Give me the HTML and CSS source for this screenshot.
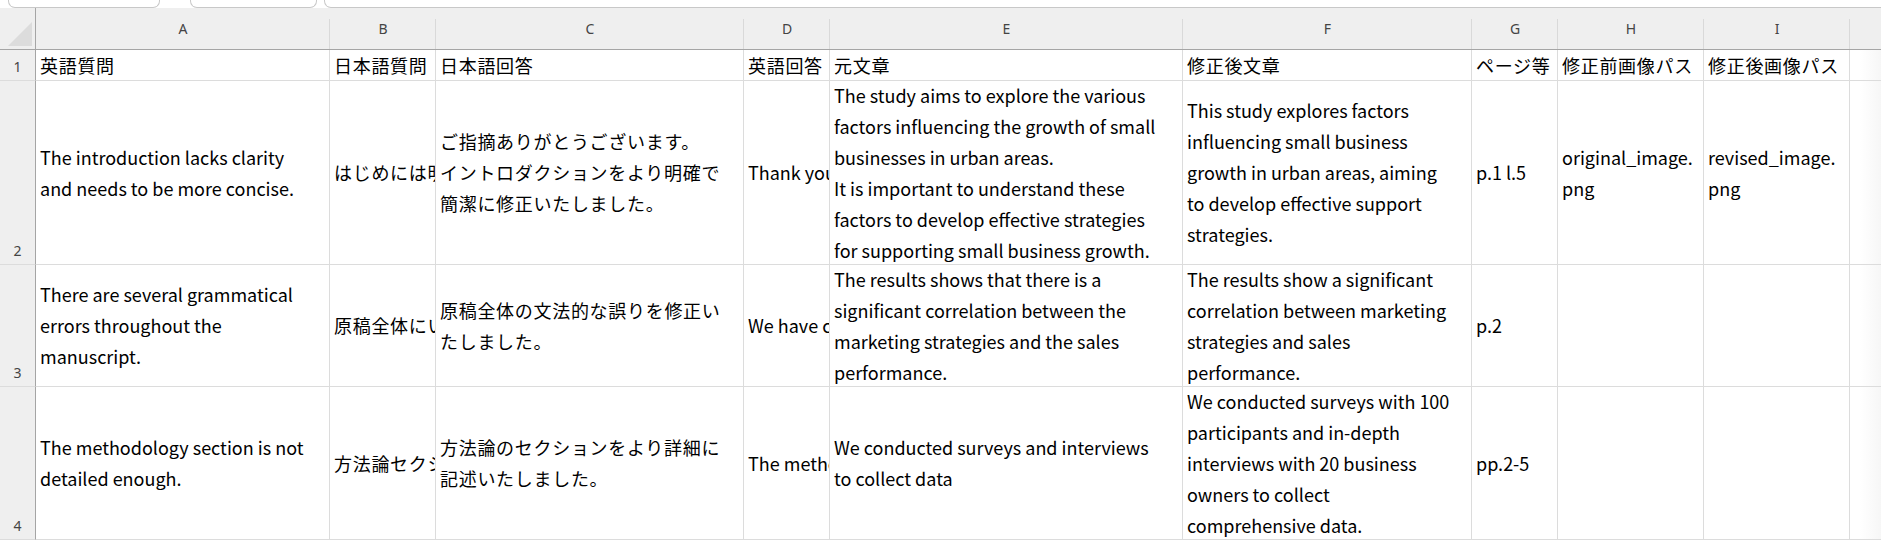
FILE: index.html
```html
<!DOCTYPE html>
<html lang="ja">
<head>
<meta charset="utf-8">
<title>Sheet</title>
<link rel="stylesheet" href="styles.css">
</head>
<body>
<div class="topbar">
  <div class="box box-name"></div>
  <div class="box box-fx"></div>
  <div class="box box-formula"></div>
</div>
<div class="sheet">
  <div class="corner"><svg width="36" height="41" viewBox="0 0 36 41"><polygon points="8,38 32,38 32,14" fill="#dcdcdc"/></svg></div>
  <div class="colhdr">A</div>
  <div class="colhdr">B</div>
  <div class="colhdr">C</div>
  <div class="colhdr">D</div>
  <div class="colhdr">E</div>
  <div class="colhdr">F</div>
  <div class="colhdr">G</div>
  <div class="colhdr">H</div>
  <div class="colhdr">I</div>
  <div class="colhdr last"></div>

  <div class="rowhdr">1</div>
  <div class="cell ja">英語質問</div>
  <div class="cell ja">日本語質問</div>
  <div class="cell ja">日本語回答</div>
  <div class="cell ja">英語回答</div>
  <div class="cell ja">元文章</div>
  <div class="cell ja">修正後文章</div>
  <div class="cell ja">ページ等</div>
  <div class="cell ja">修正前画像パス</div>
  <div class="cell ja">修正後画像パス</div>
  <div class="cell fade"></div>

  <div class="rowhdr">2</div>
  <div class="cell"><p>The introduction lacks clarity<br>and needs to be more concise.</p></div>
  <div class="cell ja"><p>はじめには明確さが欠けており、より簡潔にする必要があります。</p></div>
  <div class="cell ja"><p>ご指摘ありがとうございます。<br>イントロダクションをより明確で<br>簡潔に修正いたしました。</p></div>
  <div class="cell"><p>Thank you for your comment. We have revised the introduction.</p></div>
  <div class="cell"><p>The study aims to explore the various<br>factors influencing the growth of small<br>businesses in urban areas.<br>It is important to understand these<br>factors to develop effective strategies<br>for supporting small business growth.</p></div>
  <div class="cell"><p>This study explores factors<br>influencing small business<br>growth in urban areas, aiming<br>to develop effective support<br>strategies.</p></div>
  <div class="cell"><p>p.1 l.5</p></div>
  <div class="cell"><p>original_image.<br>png</p></div>
  <div class="cell"><p>revised_image.<br>png</p></div>
  <div class="cell fade"></div>

  <div class="rowhdr">3</div>
  <div class="cell"><p>There are several grammatical<br>errors throughout the<br>manuscript.</p></div>
  <div class="cell ja"><p>原稿全体にいくつかの文法的な誤りがあります。</p></div>
  <div class="cell ja"><p>原稿全体の文法的な誤りを修正い<br>たしました。</p></div>
  <div class="cell"><p>We have corrected the grammatical errors.</p></div>
  <div class="cell"><p>The results shows that there is a<br>significant correlation between the<br>marketing strategies and the sales<br>performance.</p></div>
  <div class="cell"><p>The results show a significant<br>correlation between marketing<br>strategies and sales<br>performance.</p></div>
  <div class="cell"><p>p.2</p></div>
  <div class="cell"></div>
  <div class="cell"></div>
  <div class="cell fade"></div>

  <div class="rowhdr">4</div>
  <div class="cell"><p>The methodology section is not<br>detailed enough.</p></div>
  <div class="cell ja"><p>方法論セクションの詳細が不十分です。</p></div>
  <div class="cell ja"><p>方法論のセクションをより詳細に<br>記述いたしました。</p></div>
  <div class="cell"><p>The methodology section has been described in more detail.</p></div>
  <div class="cell"><p>We conducted surveys and interviews<br>to collect data</p></div>
  <div class="cell"><p>We conducted surveys with 100<br>participants and in-depth<br>interviews with 20 business<br>owners to collect<br>comprehensive data.</p></div>
  <div class="cell"><p>pp.2-5</p></div>
  <div class="cell"></div>
  <div class="cell"></div>
  <div class="cell fade"></div>
</div>
</body>
</html>
```
FILE: styles.css
```css
* { box-sizing: border-box; }
html, body { margin: 0; padding: 0; background: #fff; overflow: hidden; }
body { width: 1881px; height: 540px; font-family: "Noto Sans CJK JP", "Noto Sans", sans-serif; color: #000; }

.topbar { display: flex; height: 8px; padding-left: 8px; overflow: hidden; }
.box { height: 8px; border: 1px solid #c8c8c8; border-top: none; border-radius: 0 0 7px 7px; background: #fff; }
.box-name { width: 152px; }
.box-fx { width: 127px; margin-left: 30px; }
.box-formula { flex: 1; margin-left: 7px; margin-right: -12px; }

.sheet {
  display: grid;
  grid-template-columns: 36px 294px 106px 308px 86px 353px 289px 86px 146px 146px 1fr;
  grid-template-rows: 42px 31px 184px 122px 153px;
}

.corner { background: #efefef; border-right: 1px solid #a5a5a5; border-bottom: 1px solid #a5a5a5; }
.corner svg { display: block; }

.colhdr {
  background: #efefef linear-gradient(#d9d9d9, #d9d9d9) right bottom / 1px 30px no-repeat;
  border-bottom: 1px solid #a5a5a5;
  display: flex; align-items: center; justify-content: center;
  font-family: "Noto Sans", "Liberation Sans", sans-serif;
  font-size: 14px; color: #444;
}
.colhdr.last { background: #efefef; }

.rowhdr {
  background: #efefef;
  border-right: 1px solid #a5a5a5;
  border-bottom: 1px solid #dcdcdc;
  display: flex; align-items: flex-end; justify-content: center;
  padding-bottom: 4px;
  font-family: "Noto Sans", "Liberation Sans", sans-serif;
  font-size: 14px; line-height: 19px; color: #444;
}

.cell {
  border-right: 1px solid #dcdcdc;
  border-bottom: 1px solid #dcdcdc;
  display: flex; align-items: center;
  padding: 0 4px;
  overflow: hidden;
  font-size: 18px; line-height: 31px;
  white-space: nowrap;
}
.cell.ja { letter-spacing: 0.7px; }
.cell p { margin: 0; }
.cell.fade { border-right: none; background: linear-gradient(to right, #fff 0, #fff 10px, #f6f6f6 32px); }
```
